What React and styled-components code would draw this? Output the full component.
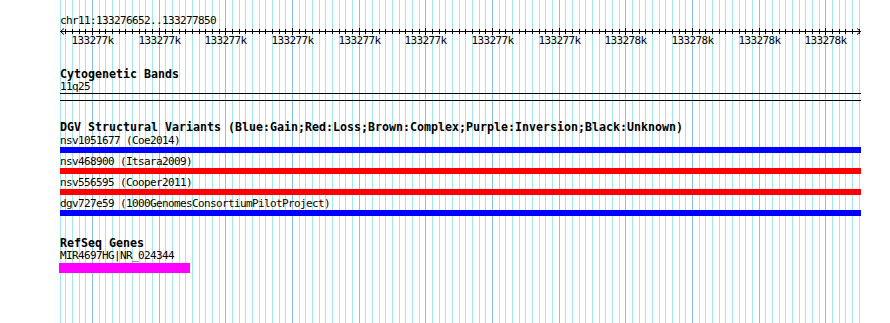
import React from "react";
import styled, { createGlobalStyle } from "styled-components";

const START = 133276652;
const END = 133277850;
const SCALE = 2 / 3;
const WIDTH = 801;

const toX = (bp) => (bp - START) * SCALE;

const gridStops = [];
for (let bp = Math.ceil(START / 10) * 10; bp <= END; bp += 10) {
  gridStops.push({ bp, x: Math.round(toX(bp)) + 0.5, major: bp % 100 === 0 });
}

const variants = [
  { name: "nsv1051677 (Coe2014)", color: "#0000ff" },
  { name: "nsv468900 (Itsara2009)", color: "#ff0000" },
  { name: "nsv556595 (Cooper2011)", color: "#ff0000" },
  { name: "dgv727e59 (1000GenomesConsortiumPilotProject)", color: "#0000ff" },
];

const GlobalStyle = createGlobalStyle`
  body {
    margin: 0;
    background: #ffffff;
  }
`;

const Page = styled.div`
  position: relative;
  width: 890px;
  height: 323px;
  overflow: hidden;
  box-sizing: border-box;
  padding-top: 15px;
  background: #ffffff;
  font-family: "DejaVu Sans Mono", "Liberation Mono", monospace;
  color: #000;
`;

const GridLayer = styled.svg`
  position: absolute;
  left: 60px;
  top: 0;
  z-index: 0;
`;

const Panel = styled.div`
  position: relative;
  z-index: 1;
  margin-left: 60px;
  width: ${WIDTH}px;
  display: flex;
  flex-direction: column;
`;

const SmallText = styled.div`
  position: relative;
  font-size: 11px;
  letter-spacing: -0.62px;
  line-height: 12px;
  height: 12px;
  white-space: pre;
  margin-top: ${(p) => p.$gap || 0}px;
`;

const TrackTitle = styled.div`
  font-weight: bold;
  font-size: 11.63px;
  line-height: 12px;
  height: 12px;
  white-space: pre;
  margin-top: ${(p) => p.$gap || 0}px;
`;

const Ruler = styled.svg`
  display: block;
  overflow: visible;
`;

const Band = styled.div`
  box-sizing: border-box;
  height: 8px;
  border-top: 1px solid #000;
  border-bottom: 1px solid #000;
`;

const VariantList = styled.div`
  display: flex;
  flex-direction: column;
  gap: 3px;
  margin-top: 2px;
`;

const Feature = styled.div`
  display: flex;
  flex-direction: column;
`;

const Bar = styled.div`
  height: ${(p) => p.$h}px;
  width: ${(p) => p.$w}px;
  margin-left: ${(p) => p.$offset || 0}px;
  margin-top: ${(p) => p.$top || 0}px;
  background: ${(p) => p.$color};
`;

const Grid = () => (
  <GridLayer width={WIDTH + 2} height={323} shapeRendering="crispEdges">
    <line x1="0.5" y1="0" x2="0.5" y2="323" stroke="#a2e6ee" />
    {gridStops.map((g) => (
      <line
        key={g.bp}
        x1={g.x}
        y1="0"
        x2={g.x}
        y2="323"
        stroke={g.major ? "#84c2ea" : "#a2e6ee"}
      />
    ))}
  </GridLayer>
);

const Scale = () => (
  <Ruler width={WIDTH} height={20}>
    <g stroke="#000" shapeRendering="crispEdges">
      <line x1="0" y1="4.5" x2={WIDTH} y2="4.5" />
      {gridStops.map((g) => (
        <line key={g.bp} x1={g.x} y1={g.major ? 1 : 2} x2={g.x} y2={g.major ? 8 : 7} />
      ))}
    </g>
    <g stroke="#000" fill="none">
      <polyline points="4,1.5 0.5,4.5 4,7.5" />
      <polyline points={`${WIDTH - 4},1.5 ${WIDTH - 0.5},4.5 ${WIDTH - 4},7.5`} />
    </g>
    <g
      fontFamily="DejaVu Sans Mono, Liberation Mono, monospace"
      fontSize="11"
      letterSpacing="-0.62"
      textAnchor="middle"
    >
      {gridStops
        .filter((g) => g.major)
        .map((g) => (
          <text key={g.bp} x={g.x} y="17">
            {Math.round(g.bp / 1000)}k
          </text>
        ))}
    </g>
  </Ruler>
);

export default function App() {
  return (
    <Page>
      <GlobalStyle />
      <Grid />
      <Panel>
        <SmallText>chr11:133276652..133277850</SmallText>
        <Scale />

        <TrackTitle $gap={21}>Cytogenetic Bands</TrackTitle>
        <SmallText $gap={1}>11q25</SmallText>
        <Band />

        <TrackTitle $gap={20}>
          DGV Structural Variants (Blue:Gain;Red:Loss;Brown:Complex;Purple:Inversion;Black:Unknown)
        </TrackTitle>
        <VariantList>
          {variants.map((v) => (
            <Feature key={v.name}>
              <SmallText>{v.name}</SmallText>
              <Bar $h={6} $w={WIDTH} $color={v.color} />
            </Feature>
          ))}
        </VariantList>

        <TrackTitle $gap={21}>RefSeq Genes</TrackTitle>
        <Feature>
          <SmallText $gap={1}>MIR4697HG|NR_024344</SmallText>
          <Bar $h={10} $w={131} $offset={-1} $top={1} $color="#ff00ff" />
        </Feature>
      </Panel>
    </Page>
  );
}
